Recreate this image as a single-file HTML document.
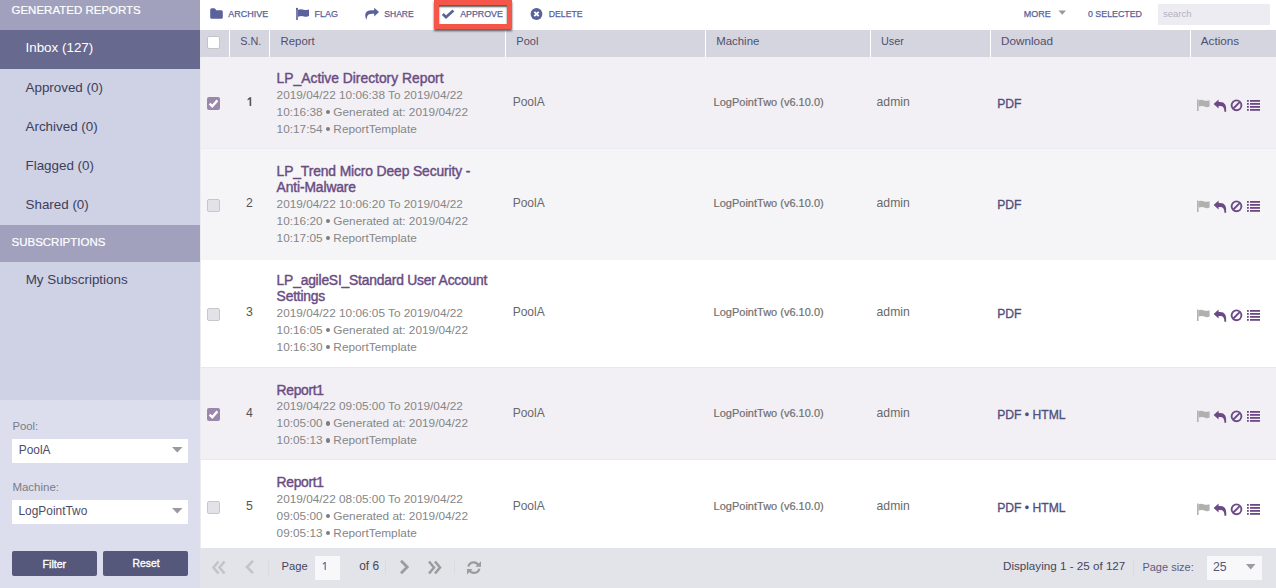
<!DOCTYPE html>
<html><head><meta charset="utf-8"><style>
html,body{margin:0;padding:0;width:1276px;height:588px;overflow:hidden;background:#fff;position:relative}
body>div, body>svg{position:absolute}
.bu{display:inline-block;width:4.8px;height:4.8px;margin:0 -0.3px;border-radius:50%;background:#7d7d7d;vertical-align:1.6px}
.t{position:absolute;line-height:20px;white-space:nowrap;font-family:'Liberation Sans', sans-serif}
</style></head><body>
<div style="left:0px;top:0px;width:200px;height:30px;background:#a1a1bd"></div>
<div class="t" style="left:11.5px;top:-0.38px;font-size:11.5px;color:#fff;font-weight:400;-webkit-text-stroke:0.2px #fff">GENERATED REPORTS</div>
<div style="left:0px;top:30px;width:200px;height:195px;background:#cfd1e4"></div>
<div style="left:0px;top:30px;width:200px;height:39px;background:#676a8e"></div>
<div class="t" style="left:25.5px;top:38.36px;font-size:13.4px;color:#fff;font-weight:400;">Inbox (127)</div>
<div class="t" style="left:25.5px;top:78.36px;font-size:13.4px;color:#3d4059;font-weight:400;">Approved (0)</div>
<div class="t" style="left:25.5px;top:117.36px;font-size:13.4px;color:#3d4059;font-weight:400;">Archived (0)</div>
<div class="t" style="left:25.5px;top:156.36px;font-size:13.4px;color:#3d4059;font-weight:400;">Flagged (0)</div>
<div class="t" style="left:25.5px;top:195.36px;font-size:13.4px;color:#3d4059;font-weight:400;">Shared (0)</div>
<div style="left:0px;top:225px;width:200px;height:37px;background:#a1a1bd"></div>
<div class="t" style="left:11.5px;top:232.02px;font-size:11.5px;color:#fff;font-weight:400;-webkit-text-stroke:0.2px #fff">SUBSCRIPTIONS</div>
<div style="left:0px;top:262px;width:200px;height:138px;background:#cfd1e4"></div>
<div class="t" style="left:25.7px;top:270.36px;font-size:13.4px;color:#3d4059;font-weight:400;">My Subscriptions</div>
<div style="left:0px;top:400px;width:200px;height:188px;background:#dcdeee"></div>
<div class="t" style="left:12.5px;top:416.08px;font-size:11.3px;color:#7b7b85;font-weight:400;">Pool:</div>
<div style="left:12px;top:439px;width:176px;height:24px;background:#fff"></div>
<div class="t" style="left:18.8px;top:439.88px;font-size:11.9px;color:#4d4b68;font-weight:400;">PoolA</div>
<svg style="position:absolute;left:172px;top:447px" width="11" height="6"><path d="M0 0H10.5L5.25 5.5Z" fill="#9a9a9e"/></svg>
<div class="t" style="left:12.4px;top:477.02px;font-size:11.5px;color:#7b7b85;font-weight:400;">Machine:</div>
<div style="left:12px;top:500px;width:176px;height:24px;background:#fff"></div>
<div class="t" style="left:18.5px;top:500.88px;font-size:11.9px;color:#4d4b68;font-weight:400;">LogPointTwo</div>
<svg style="position:absolute;left:172px;top:508px" width="11" height="6"><path d="M0 0H10.5L5.25 5.5Z" fill="#9a9a9e"/></svg>
<div style="left:12px;top:551px;width:85px;height:25px;background:#55587a;border-radius:2px"></div>
<div style="left:103px;top:551px;width:85px;height:25px;background:#55587a;border-radius:2px"></div>
<div class="t" style="left:42.6px;top:553.83px;font-size:10.6px;color:#fff;font-weight:400;-webkit-text-stroke:0.35px #fff">Filter</div>
<div class="t" style="left:132.6px;top:553.93px;font-size:10.3px;color:#fff;font-weight:400;-webkit-text-stroke:0.35px #fff">Reset</div>
<div style="left:200px;top:0px;width:1076px;height:30px;background:#fff"></div>
<svg style="position:absolute;left:210px;top:8px" width="14" height="12" viewBox="0 0 14 12"><path d="M0.2 1.7Q0.2 0.2 1.7 0.2H4Q5 0.2 5.6 1.2L6.2 2.3H11.3Q12.8 2.3 12.8 3.8V9.3Q12.8 10.8 11.3 10.8H1.7Q0.2 10.8 0.2 9.3Z" fill="#59629a"/></svg>
<div class="t" style="left:228.2px;top:4.38px;font-size:9.0px;color:#5a6196;font-weight:400;-webkit-text-stroke:0.25px #5a6196">ARCHIVE</div>
<svg style="position:absolute;left:295px;top:7px" width="16" height="14" viewBox="0 0 16 14"><rect x="1.2" y="1.6" width="1.6" height="11.4" fill="#59629a"/><circle cx="2" cy="1.9" r="1.1" fill="#59629a"/><path d="M3 3Q5 1.6 7.5 2.6T14 2.4V9Q11.5 10.4 9 9.4T3 9.8Z" fill="#59629a"/></svg>
<div class="t" style="left:314.6px;top:4.38px;font-size:9.0px;color:#5a6196;font-weight:400;-webkit-text-stroke:0.25px #5a6196">FLAG</div>
<svg style="position:absolute;left:365px;top:7px" width="15" height="14" viewBox="0 0 15 14"><path d="M9.2 0.8L14 5L9.2 9.5V6.8H7Q3 6.8 2 10Q1.6 11.5 1.6 12.7Q0.2 10.5 0.2 8.2Q0.2 3.3 7 3.3H9.2Z" fill="#59629a"/></svg>
<div class="t" style="left:384.3px;top:4.04px;font-size:8.55px;color:#5a6196;font-weight:400;-webkit-text-stroke:0.25px #5a6196">SHARE</div>
<svg style="position:absolute;left:441px;top:9px" width="15" height="11" viewBox="0 0 15 11"><path d="M1.8 5.0L5.0 8.2L12.4 1.4" stroke="#59629a" stroke-width="2.7" fill="none"/></svg>
<div class="t" style="left:460.2px;top:4.44px;font-size:8.84px;color:#5a6196;font-weight:400;-webkit-text-stroke:0.25px #5a6196">APPROVE</div>
<svg style="position:absolute;left:530px;top:8px" width="13" height="13" viewBox="0 0 13 13"><circle cx="6.5" cy="6" r="5.9" fill="#59629a"/><path d="M4.3 3.8L8.7 8.2M8.7 3.8L4.3 8.2" stroke="#fff" stroke-width="1.9"/></svg>
<div class="t" style="left:548.8px;top:4.49px;font-size:8.7px;color:#5a6196;font-weight:400;-webkit-text-stroke:0.25px #5a6196">DELETE</div>
<div class="t" style="left:1023.8px;top:4.39px;font-size:8.97px;color:#5a6196;font-weight:400;-webkit-text-stroke:0.25px #5a6196">MORE</div>
<svg style="position:absolute;left:1058px;top:10px" width="9" height="6"><path d="M0.5 0.5H8L4.25 4.8Z" fill="#9a9a9e"/></svg>
<div class="t" style="left:1088px;top:4.44px;font-size:8.83px;color:#5a6196;font-weight:400;-webkit-text-stroke:0.25px #5a6196">0 SELECTED</div>
<div style="left:1158px;top:4px;width:112px;height:21px;background:#eeecf3"></div>
<div class="t" style="left:1163px;top:3.91px;font-size:9.5px;color:#b3b1c2;font-weight:400;">search</div>
<div style="left:200px;top:30px;width:1076px;height:27px;background:#d5d5df"></div>
<div style="left:229px;top:30px;width:1px;height:27px;background:#fff"></div>
<div style="left:269px;top:30px;width:1px;height:27px;background:#fff"></div>
<div style="left:505px;top:30px;width:1px;height:27px;background:#fff"></div>
<div style="left:705px;top:30px;width:1px;height:27px;background:#fff"></div>
<div style="left:870px;top:30px;width:1px;height:27px;background:#fff"></div>
<div style="left:990px;top:30px;width:1px;height:27px;background:#fff"></div>
<div style="left:1190px;top:30px;width:1px;height:27px;background:#fff"></div>
<div style="left:207px;top:36px;width:13px;height:13px;background:#fff;border:1px solid #c4c4c8;border-radius:2px;box-sizing:border-box"></div>
<div class="t" style="left:240.3px;top:31.24px;font-size:10.85px;color:#4f4f6f;font-weight:400;">S.N.</div>
<div class="t" style="left:280.6px;top:31.06px;font-size:11.36px;color:#4f4f6f;font-weight:400;">Report</div>
<div class="t" style="left:516.3px;top:31.17px;font-size:11.04px;color:#4f4f6f;font-weight:400;">Pool</div>
<div class="t" style="left:716.2px;top:31.04px;font-size:11.43px;color:#4f4f6f;font-weight:400;">Machine</div>
<div class="t" style="left:881px;top:31.23px;font-size:10.89px;color:#4f4f6f;font-weight:400;">User</div>
<div class="t" style="left:1001px;top:30.95px;font-size:11.69px;color:#4f4f6f;font-weight:400;">Download</div>
<div class="t" style="left:1200.8px;top:30.95px;font-size:11.7px;color:#4f4f6f;font-weight:400;">Actions</div>
<div style="left:200px;top:57px;width:1076px;height:92px;background:#f2f0f5"></div>
<div style="left:200px;top:148px;width:1076px;height:1px;background:#ecebf0"></div>
<svg style="position:absolute;left:207px;top:96.5px" width="13" height="13" viewBox="0 0 13 13"><rect width="13" height="13" rx="2" fill="#9b87ac"/><path d="M2.6 6.6L5.3 9.3L10.4 3.4" stroke="#fff" stroke-width="2.4" fill="none"/></svg>
<svg style="position:absolute;left:246px;top:96.0px" width="8" height="11" viewBox="0 0 8 11"><path d="M3.6 1.2H5.2V10H3.6V3.3L1.6 4.5V2.9Z" fill="#555"/></svg>
<div class="t" style="left:276.6px;top:68.20px;font-size:13.85px;color:#6a4c82;font-weight:400;letter-spacing:0px;-webkit-text-stroke:0.42px #6a4c82">LP_Active Directory Report</div>
<div class="t" style="left:276.6px;top:84.90px;font-size:11.82px;color:#868686;font-weight:400;">2019/04/22 10:06:38 To 2019/04/22</div>
<div class="t" style="left:276.6px;top:101.90px;font-size:11.82px;color:#868686;font-weight:400;">10:16:38 <span class="bu"></span> Generated at: 2019/04/22</div>
<div class="t" style="left:276.6px;top:118.90px;font-size:11.82px;color:#868686;font-weight:400;">10:17:54 <span class="bu"></span> ReportTemplate</div>
<div class="t" style="left:512.7px;top:91.84px;font-size:12.0px;color:#696969;font-weight:400;">PoolA</div>
<div class="t" style="left:713.6px;top:91.69px;font-size:11.0px;color:#6f6f6f;font-weight:400;-webkit-text-stroke:0.2px #6f6f6f">LogPointTwo (v6.10.0)</div>
<div class="t" style="left:876.6px;top:92.17px;font-size:12.2px;color:#696969;font-weight:400;">admin</div>
<div class="t" style="left:997.2px;top:93.79px;font-size:12.15px;color:#4d4f7c;font-weight:400;-webkit-text-stroke:0.3px #4d4f7c">PDF</div>
<svg style="position:absolute;left:1196px;top:98.5px" width="66" height="13" viewBox="0 0 66 13"><rect x="1" y="0.5" width="1.6" height="11.5" fill="#b5b1b5"/><path d="M2.6 1.3Q5 0.2 7.5 1.3T13.6 1.3V7.6Q11 8.7 8.5 7.6T2.6 7.6Z" fill="#b0b0b0"/><path d="M17.6 5.0L22.6 0.5V3.0H24.2Q31.2 3.0 30.2 12.7L28.4 12.7Q28.6 7.0 24.2 7.0H22.6V9.6Z" fill="#6b4a85"/><circle cx="40.5" cy="6.3" r="4.9" stroke="#6b4a85" stroke-width="1.9" fill="none"/><path d="M37.3 9.5L43.7 3.1" stroke="#6b4a85" stroke-width="1.9"/><g fill="#6b4a85"><rect x="51" y="1" width="1.8" height="1.8"/><rect x="51" y="4" width="1.8" height="1.8"/><rect x="51" y="7" width="1.8" height="1.8"/><rect x="51" y="10" width="1.8" height="1.8"/><rect x="54" y="1" width="10" height="1.8"/><rect x="54" y="4" width="10" height="1.8"/><rect x="54" y="7" width="10" height="1.8"/><rect x="54" y="10" width="10" height="1.8"/></g></svg>
<div style="left:200px;top:149px;width:1076px;height:111px;background:#f5f5f7"></div>
<div style="left:207px;top:198.5px;width:13px;height:13px;background:#e2e2e8;border:1px solid #c6c6cc;border-radius:2px;box-sizing:border-box"></div>
<div class="t" style="left:246.0px;top:193.04px;font-size:12.3px;color:#555;font-weight:400;">2</div>
<div class="t" style="left:276.6px;top:161.20px;font-size:13.85px;color:#6a4c82;font-weight:400;letter-spacing:-0.12px;-webkit-text-stroke:0.42px #6a4c82">LP_Trend Micro Deep Security -</div>
<div class="t" style="left:276.6px;top:177.20px;font-size:13.85px;color:#6a4c82;font-weight:400;letter-spacing:-0.12px;-webkit-text-stroke:0.42px #6a4c82">Anti-Malware</div>
<div class="t" style="left:276.6px;top:193.90px;font-size:11.82px;color:#868686;font-weight:400;">2019/04/22 10:06:20 To 2019/04/22</div>
<div class="t" style="left:276.6px;top:210.90px;font-size:11.82px;color:#868686;font-weight:400;">10:16:20 <span class="bu"></span> Generated at: 2019/04/22</div>
<div class="t" style="left:276.6px;top:227.90px;font-size:11.82px;color:#868686;font-weight:400;">10:17:05 <span class="bu"></span> ReportTemplate</div>
<div class="t" style="left:512.7px;top:193.14px;font-size:12.0px;color:#696969;font-weight:400;">PoolA</div>
<div class="t" style="left:713.6px;top:192.99px;font-size:11.0px;color:#6f6f6f;font-weight:400;-webkit-text-stroke:0.2px #6f6f6f">LogPointTwo (v6.10.0)</div>
<div class="t" style="left:876.6px;top:193.47px;font-size:12.2px;color:#696969;font-weight:400;">admin</div>
<div class="t" style="left:997.2px;top:195.09px;font-size:12.15px;color:#4d4f7c;font-weight:400;-webkit-text-stroke:0.3px #4d4f7c">PDF</div>
<svg style="position:absolute;left:1196px;top:199.8px" width="66" height="13" viewBox="0 0 66 13"><rect x="1" y="0.5" width="1.6" height="11.5" fill="#b5b1b5"/><path d="M2.6 1.3Q5 0.2 7.5 1.3T13.6 1.3V7.6Q11 8.7 8.5 7.6T2.6 7.6Z" fill="#b0b0b0"/><path d="M17.6 5.0L22.6 0.5V3.0H24.2Q31.2 3.0 30.2 12.7L28.4 12.7Q28.6 7.0 24.2 7.0H22.6V9.6Z" fill="#6b4a85"/><circle cx="40.5" cy="6.3" r="4.9" stroke="#6b4a85" stroke-width="1.9" fill="none"/><path d="M37.3 9.5L43.7 3.1" stroke="#6b4a85" stroke-width="1.9"/><g fill="#6b4a85"><rect x="51" y="1" width="1.8" height="1.8"/><rect x="51" y="4" width="1.8" height="1.8"/><rect x="51" y="7" width="1.8" height="1.8"/><rect x="51" y="10" width="1.8" height="1.8"/><rect x="54" y="1" width="10" height="1.8"/><rect x="54" y="4" width="10" height="1.8"/><rect x="54" y="7" width="10" height="1.8"/><rect x="54" y="10" width="10" height="1.8"/></g></svg>
<div style="left:200px;top:260px;width:1076px;height:108px;background:#ffffff"></div>
<div style="left:200px;top:367px;width:1076px;height:1px;background:#e9e9ed"></div>
<div style="left:207px;top:308.0px;width:13px;height:13px;background:#e2e2e8;border:1px solid #c6c6cc;border-radius:2px;box-sizing:border-box"></div>
<div class="t" style="left:246.0px;top:302.04px;font-size:12.3px;color:#555;font-weight:400;">3</div>
<div class="t" style="left:276.6px;top:270.20px;font-size:13.85px;color:#6a4c82;font-weight:400;letter-spacing:-0.2px;-webkit-text-stroke:0.42px #6a4c82">LP_agileSI_Standard User Account</div>
<div class="t" style="left:276.6px;top:286.20px;font-size:13.85px;color:#6a4c82;font-weight:400;letter-spacing:-0.2px;-webkit-text-stroke:0.42px #6a4c82">Settings</div>
<div class="t" style="left:276.6px;top:302.90px;font-size:11.82px;color:#868686;font-weight:400;">2019/04/22 10:06:05 To 2019/04/22</div>
<div class="t" style="left:276.6px;top:319.90px;font-size:11.82px;color:#868686;font-weight:400;">10:16:05 <span class="bu"></span> Generated at: 2019/04/22</div>
<div class="t" style="left:276.6px;top:336.90px;font-size:11.82px;color:#868686;font-weight:400;">10:16:30 <span class="bu"></span> ReportTemplate</div>
<div class="t" style="left:512.7px;top:302.14px;font-size:12.0px;color:#696969;font-weight:400;">PoolA</div>
<div class="t" style="left:713.6px;top:301.99px;font-size:11.0px;color:#6f6f6f;font-weight:400;-webkit-text-stroke:0.2px #6f6f6f">LogPointTwo (v6.10.0)</div>
<div class="t" style="left:876.6px;top:302.47px;font-size:12.2px;color:#696969;font-weight:400;">admin</div>
<div class="t" style="left:997.2px;top:304.09px;font-size:12.15px;color:#4d4f7c;font-weight:400;-webkit-text-stroke:0.3px #4d4f7c">PDF</div>
<svg style="position:absolute;left:1196px;top:308.8px" width="66" height="13" viewBox="0 0 66 13"><rect x="1" y="0.5" width="1.6" height="11.5" fill="#b5b1b5"/><path d="M2.6 1.3Q5 0.2 7.5 1.3T13.6 1.3V7.6Q11 8.7 8.5 7.6T2.6 7.6Z" fill="#b0b0b0"/><path d="M17.6 5.0L22.6 0.5V3.0H24.2Q31.2 3.0 30.2 12.7L28.4 12.7Q28.6 7.0 24.2 7.0H22.6V9.6Z" fill="#6b4a85"/><circle cx="40.5" cy="6.3" r="4.9" stroke="#6b4a85" stroke-width="1.9" fill="none"/><path d="M37.3 9.5L43.7 3.1" stroke="#6b4a85" stroke-width="1.9"/><g fill="#6b4a85"><rect x="51" y="1" width="1.8" height="1.8"/><rect x="51" y="4" width="1.8" height="1.8"/><rect x="51" y="7" width="1.8" height="1.8"/><rect x="51" y="10" width="1.8" height="1.8"/><rect x="54" y="1" width="10" height="1.8"/><rect x="54" y="4" width="10" height="1.8"/><rect x="54" y="7" width="10" height="1.8"/><rect x="54" y="10" width="10" height="1.8"/></g></svg>
<div style="left:200px;top:368px;width:1076px;height:92px;background:#f2f0f5"></div>
<div style="left:200px;top:459px;width:1076px;height:1px;background:#e9e9ed"></div>
<svg style="position:absolute;left:207px;top:407.5px" width="13" height="13" viewBox="0 0 13 13"><rect width="13" height="13" rx="2" fill="#9b87ac"/><path d="M2.6 6.6L5.3 9.3L10.4 3.4" stroke="#fff" stroke-width="2.4" fill="none"/></svg>
<div class="t" style="left:246.0px;top:402.74px;font-size:12.3px;color:#555;font-weight:400;">4</div>
<div class="t" style="left:276.6px;top:379.70px;font-size:13.85px;color:#6a4c82;font-weight:400;letter-spacing:-0.3px;-webkit-text-stroke:0.42px #6a4c82">Report1</div>
<div class="t" style="left:276.6px;top:396.40px;font-size:11.82px;color:#868686;font-weight:400;">2019/04/22 09:05:00 To 2019/04/22</div>
<div class="t" style="left:276.6px;top:413.40px;font-size:11.82px;color:#868686;font-weight:400;">10:05:00 <span class="bu"></span> Generated at: 2019/04/22</div>
<div class="t" style="left:276.6px;top:430.40px;font-size:11.82px;color:#868686;font-weight:400;">10:05:13 <span class="bu"></span> ReportTemplate</div>
<div class="t" style="left:512.7px;top:402.84px;font-size:12.0px;color:#696969;font-weight:400;">PoolA</div>
<div class="t" style="left:713.6px;top:402.69px;font-size:11.0px;color:#6f6f6f;font-weight:400;-webkit-text-stroke:0.2px #6f6f6f">LogPointTwo (v6.10.0)</div>
<div class="t" style="left:876.6px;top:403.17px;font-size:12.2px;color:#696969;font-weight:400;">admin</div>
<div class="t" style="left:997.2px;top:404.79px;font-size:12.15px;color:#4d4f7c;font-weight:400;-webkit-text-stroke:0.3px #4d4f7c">PDF &bull; HTML</div>
<svg style="position:absolute;left:1196px;top:409.5px" width="66" height="13" viewBox="0 0 66 13"><rect x="1" y="0.5" width="1.6" height="11.5" fill="#b5b1b5"/><path d="M2.6 1.3Q5 0.2 7.5 1.3T13.6 1.3V7.6Q11 8.7 8.5 7.6T2.6 7.6Z" fill="#b0b0b0"/><path d="M17.6 5.0L22.6 0.5V3.0H24.2Q31.2 3.0 30.2 12.7L28.4 12.7Q28.6 7.0 24.2 7.0H22.6V9.6Z" fill="#6b4a85"/><circle cx="40.5" cy="6.3" r="4.9" stroke="#6b4a85" stroke-width="1.9" fill="none"/><path d="M37.3 9.5L43.7 3.1" stroke="#6b4a85" stroke-width="1.9"/><g fill="#6b4a85"><rect x="51" y="1" width="1.8" height="1.8"/><rect x="51" y="4" width="1.8" height="1.8"/><rect x="51" y="7" width="1.8" height="1.8"/><rect x="51" y="10" width="1.8" height="1.8"/><rect x="54" y="1" width="10" height="1.8"/><rect x="54" y="4" width="10" height="1.8"/><rect x="54" y="7" width="10" height="1.8"/><rect x="54" y="10" width="10" height="1.8"/></g></svg>
<div style="left:200px;top:460px;width:1076px;height:94px;background:#ffffff"></div>
<div style="left:207px;top:501.0px;width:13px;height:13px;background:#e2e2e8;border:1px solid #c6c6cc;border-radius:2px;box-sizing:border-box"></div>
<div class="t" style="left:246.0px;top:496.04px;font-size:12.3px;color:#555;font-weight:400;">5</div>
<div class="t" style="left:276.6px;top:472.20px;font-size:13.85px;color:#6a4c82;font-weight:400;letter-spacing:-0.3px;-webkit-text-stroke:0.42px #6a4c82">Report1</div>
<div class="t" style="left:276.6px;top:488.90px;font-size:11.82px;color:#868686;font-weight:400;">2019/04/22 08:05:00 To 2019/04/22</div>
<div class="t" style="left:276.6px;top:505.90px;font-size:11.82px;color:#868686;font-weight:400;">09:05:00 <span class="bu"></span> Generated at: 2019/04/22</div>
<div class="t" style="left:276.6px;top:522.90px;font-size:11.82px;color:#868686;font-weight:400;">09:05:13 <span class="bu"></span> ReportTemplate</div>
<div class="t" style="left:512.7px;top:496.14px;font-size:12.0px;color:#696969;font-weight:400;">PoolA</div>
<div class="t" style="left:713.6px;top:495.99px;font-size:11.0px;color:#6f6f6f;font-weight:400;-webkit-text-stroke:0.2px #6f6f6f">LogPointTwo (v6.10.0)</div>
<div class="t" style="left:876.6px;top:496.47px;font-size:12.2px;color:#696969;font-weight:400;">admin</div>
<div class="t" style="left:997.2px;top:498.09px;font-size:12.15px;color:#4d4f7c;font-weight:400;-webkit-text-stroke:0.3px #4d4f7c">PDF &bull; HTML</div>
<svg style="position:absolute;left:1196px;top:502.8px" width="66" height="13" viewBox="0 0 66 13"><rect x="1" y="0.5" width="1.6" height="11.5" fill="#b5b1b5"/><path d="M2.6 1.3Q5 0.2 7.5 1.3T13.6 1.3V7.6Q11 8.7 8.5 7.6T2.6 7.6Z" fill="#b0b0b0"/><path d="M17.6 5.0L22.6 0.5V3.0H24.2Q31.2 3.0 30.2 12.7L28.4 12.7Q28.6 7.0 24.2 7.0H22.6V9.6Z" fill="#6b4a85"/><circle cx="40.5" cy="6.3" r="4.9" stroke="#6b4a85" stroke-width="1.9" fill="none"/><path d="M37.3 9.5L43.7 3.1" stroke="#6b4a85" stroke-width="1.9"/><g fill="#6b4a85"><rect x="51" y="1" width="1.8" height="1.8"/><rect x="51" y="4" width="1.8" height="1.8"/><rect x="51" y="7" width="1.8" height="1.8"/><rect x="51" y="10" width="1.8" height="1.8"/><rect x="54" y="1" width="10" height="1.8"/><rect x="54" y="4" width="10" height="1.8"/><rect x="54" y="7" width="10" height="1.8"/><rect x="54" y="10" width="10" height="1.8"/></g></svg>
<div style="left:200px;top:57px;width:1px;height:491px;background:#ececf0"></div>
<div style="left:200px;top:548px;width:1076px;height:40px;background:#e3e3ea"></div>
<svg style="position:absolute;left:211px;top:560px" width="18" height="16" viewBox="0 0 18 16"><path d="M7.5 1.5L2.5 7.5L7.5 13.5M13.5 1.5L8.5 7.5L13.5 13.5" stroke="#c3c3c9" stroke-width="2.6" fill="none"/></svg>
<svg style="position:absolute;left:244px;top:559px" width="12" height="16" viewBox="0 0 12 16"><path d="M9 1.8L3 8L9 14.2" stroke="#c3c3c9" stroke-width="2.6" fill="none"/></svg>
<div style="left:268px;top:561px;width:1px;height:14px;background:#dadae0"></div>
<div class="t" style="left:281.5px;top:556.12px;font-size:11.2px;color:#45465a;font-weight:400;">Page</div>
<div style="left:315px;top:556px;width:25px;height:24px;background:#f8f8fa"></div>
<svg style="position:absolute;left:320px;top:561px" width="8" height="10" viewBox="0 0 8 10"><path d="M4.6 1H5.8V9H4.6V2.6L2.8 3.7V2.5Z" fill="#6a6a8e"/></svg>
<div class="t" style="left:359.2px;top:555.88px;font-size:11.9px;color:#45465a;font-weight:400;">of 6</div>
<div style="left:385px;top:561px;width:1px;height:13px;background:#dadae0"></div>
<svg style="position:absolute;left:398px;top:559px" width="13" height="16" viewBox="0 0 13 16"><path d="M3 1.8L9.2 8L3 14.2" stroke="#9c9c9f" stroke-width="2.8" fill="none"/></svg>
<svg style="position:absolute;left:426px;top:560px" width="18" height="16" viewBox="0 0 18 16"><path d="M3 1.5L8 7.5L3 13.5M9 1.5L14 7.5L9 13.5" stroke="#9c9c9f" stroke-width="2.6" fill="none"/></svg>
<div style="left:454px;top:561px;width:1px;height:13px;background:#dadae0"></div>
<svg style="position:absolute;left:466px;top:560px" width="16" height="16" viewBox="0 0 16 16"><path d="M12.6 5.6A5.4 5.4 0 0 0 2.4 6.6M3.2 9.6A5.4 5.4 0 0 0 13.4 8.8" stroke="#9c9c9f" stroke-width="2.3" fill="none"/><path d="M15 1.2V6.8H9.4Z M1 14.6V9H6.6Z" fill="#9c9c9f"/></svg>
<div class="t" style="left:1003px;top:555.96px;font-size:11.65px;color:#45465a;font-weight:400;">Displaying 1 - 25 of 127</div>
<div style="left:1133px;top:561px;width:1px;height:14px;background:#dadae0"></div>
<div class="t" style="left:1142.4px;top:556.59px;font-size:11.0px;color:#5c5c7e;font-weight:400;">Page size:</div>
<div style="left:1207px;top:556px;width:55px;height:24px;background:#f8f8fa"></div>
<div class="t" style="left:1213px;top:556.74px;font-size:12.3px;color:#56567a;font-weight:400;">25</div>
<svg style="position:absolute;left:1246px;top:564px" width="10" height="6"><path d="M0 0H9.5L4.75 5.5Z" fill="#9c9c9f"/></svg>
<div style="left:434px;top:0px;width:78px;height:29px;box-sizing:border-box;border:5px solid #f4574a;box-shadow:0 2px 2px rgba(40,40,40,.75), inset 0 2px 2px rgba(30,30,30,.75)"></div>
</body></html>
